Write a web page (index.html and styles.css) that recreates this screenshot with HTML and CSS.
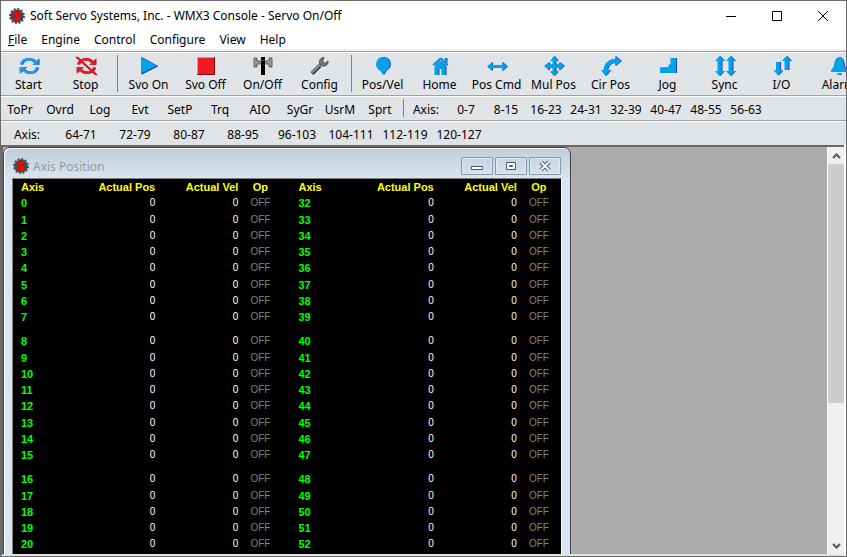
FILE: index.html
```html
<!DOCTYPE html>
<html lang="en">
<head>
    <meta charset="UTF-8">
    <meta name="viewport" content="width=device-width, initial-scale=1.0">
    <title>Soft Servo Systems, Inc. - WMX3 Console - Servo On/Off</title>
    <link rel="stylesheet" href="styles.css">
</head>
<body>
    <!-- shared icon shapes -->
    <svg class="defs" width="0" height="0">
        <symbol id="gear" viewBox="0 0 16 16">
            <circle cx="8" cy="8" r="7" fill="none" stroke="#555" stroke-width="2" stroke-dasharray="2.2 1.46"/>
            <circle cx="8" cy="8" r="6.6" fill="#484848"/>
            <path d="M4.500 4L11 3.200V5L9 8l2.500 3-.3 1.300-6.700.700V11.500L7 8 4.500 5.500z" fill="#f00"/>
        </symbol>
        <symbol id="cycle" viewBox="0 0 20 18">
            <path d="M2 7.500C3 4 6 2.200 9.500 2.200c2.500 0 4.500 1 6 2.800M18 10.500c-1 3.500-4 5.300-7.500 5.300-2.500 0-4.500-1-6-2.800" fill="none" stroke="currentColor" stroke-width="2.400"/>
            <path d="M19.500 1.500V8H13zM.5 16.500V10H7z" fill="currentColor"/>
        </symbol>
    </svg>

    <div class="window">
        <header class="title-bar">
            <svg class="app-icon"><use href="#gear"/></svg>
            <h1>Soft Servo Systems, Inc. - WMX3 Console - Servo On/Off</h1>
            <button class="caption" aria-label="Minimize"><svg width="10" height="10"><path d="M0 5.500h10"/></svg></button>
            <button class="caption" aria-label="Maximize"><svg width="10" height="10"><path d="M.5.5h9v9h-9z"/></svg></button>
            <button class="caption" aria-label="Close"><svg width="10" height="10"><path d="M0 0l10 10M10 0L0 10"/></svg></button>
        </header>

        <nav class="menu-bar">
            <button><u>F</u>ile</button>
            <button>Engine</button>
            <button>Control</button>
            <button>Configure</button>
            <button>View</button>
            <button>Help</button>
        </nav>

        <div class="toolbar main-tools">
            <button><svg viewBox="0 0 20 18" color="#1c9cf0"><use href="#cycle"/></svg>Start</button>
            <button><svg class="stop" viewBox="0 0 20 18" color="#e0202c"><use href="#cycle"/><path d="M0 0l20 18" stroke="#e81123" stroke-width="1.500"/></svg>Stop</button>
            <i class="sep"></i>
            <button><svg viewBox="0 0 20 18"><path d="M2 0v17l16-8z" fill="#00a2e8"/><path d="M2 17l16-8" stroke="#2848c8"/></svg>Svo On</button>
            <button><svg class="flat" viewBox="0 0 20 18"><path d="M1 0h18v18H1z" fill="#880015"/><path d="M1 0h17v17H1z" fill="#ff8a94"/><path d="M2 1h16v16H2z" fill="#ed1c24"/></svg>Svo Off</button>
            <button><svg class="flat" viewBox="0 0 20 18"><path d="M8 0h4v3H8zM8 7h4v11H8z" fill="#000"/><path d="M1 1h3v3h12V1h3v9h-3V7H4v3H1z" fill="#999" stroke="#444" stroke-width=".8"/><path d="M8 3.500h4v4H8z" fill="#000"/></svg>On/Off</button>
            <button><svg class="flat" viewBox="0 0 20 18"><path d="M2 16.500l8-8" stroke="#333" stroke-width="4"/><path d="M2 15.500l9-9" stroke="#8a8a8a" stroke-width="2.500"/><path d="M14 .5c-3 0-5 2.500-4.500 5S12 9.500 14.500 9s4-2.500 3.500-5L15 6.500 12.500 4z" fill="#777" stroke="#333" stroke-width=".8"/></svg>Config</button>
            <i class="sep"></i>
            <button><svg viewBox="0 0 20 18"><path d="M10 0a7 7 0 0 1 7 7c0 3-1.500 5-4 6.500L10 18l-2.500-4C4.500 12.500 3 10 3 7a7 7 0 0 1 7-7z" fill="#00a2e8"/></svg>Pos/Vel</button>
            <button><svg viewBox="0 0 20 18"><path d="M10 .5l7.500 7-1 1-6.500-6-6.500 6-1-1zM10 4l5.500 5v9h-4v-6h-3v6h-4V9zM14.500 1h2v5l-2-2z" fill="#00a2e8"/></svg>Home</button>
            <button><svg viewBox="0 0 20 18"><path d="M0 9.500L5 5v3h10V5l5 4.500-5 4.500v-3H5v3z" fill="#00a2e8"/></svg>Pos Cmd</button>
            <button><svg viewBox="0 0 20 18"><path d="M10-1l4 5h-2.500v3.500H15V5l5 4-5 4.500V11h-3.500v3.500H14l-4 4.500-4-4.500h2.500V11H5v2.500L0 9l5-4v2.500h3.500V4H6z" fill="#00a2e8"/></svg>Mul Pos</button>
            <button><svg viewBox="0 0 20 18"><path d="M4.500 14c0-6 4-10 10-10" fill="none" stroke="#00a2e8" stroke-width="4"/><path d="M14-1l6 5-6 5zM0 13h9.500l-5 6z" fill="#00a2e8"/></svg>Cir Pos</button>
            <button><svg viewBox="0 0 20 18"><path d="M2 10.500h8.500V8l2-1V1H18v15H2z" fill="#00a2e8"/></svg>Jog</button>
            <button><svg viewBox="0 0 20 18"><path d="M4.500-1L9 4H6.500v10H9l-4.500 5L0 14h2.500V4H0zM15.500-1L20 4h-2.500v10H20l-4.500 5-4.500-5h2.500V4H11z" fill="#00a2e8"/></svg>Sync</button>
            <button><svg viewBox="0 0 20 18"><path d="M4 5h4v8.500h2.500L6 18.500l-4.500-5H4zM14.500-1L19 4h-2.500v9h-4V4H10z" fill="#00a2e8"/></svg>I/O</button>
            <button><svg viewBox="0 0 20 18"><path d="M10 0c4 1 4.500 4 5 9l3 4.500V15H2v-1.500L5 9c.5-5 1-8 5-9zM8.500 16h3v2h-3z" fill="#00a2e8"/></svg>Alarm</button>
        </div>

        <div class="toolbar page-tools">
            <button>ToPr</button>
            <button>Ovrd</button>
            <button>Log</button>
            <button>Evt</button>
            <button>SetP</button>
            <button>Trq</button>
            <button>AIO</button>
            <button>SyGr</button>
            <button>UsrM</button>
            <button>Sprt</button>
            <i class="sep"></i>
            <span>Axis:</span>
            <button>0-7</button>
            <button>8-15</button>
            <button>16-23</button>
            <button>24-31</button>
            <button>32-39</button>
            <button>40-47</button>
            <button>48-55</button>
            <button>56-63</button>
        </div>

        <div class="toolbar axis-tools">
            <span>Axis:</span>
            <button>64-71</button>
            <button>72-79</button>
            <button>80-87</button>
            <button>88-95</button>
            <button>96-103</button>
            <button>104-111</button>
            <button>112-119</button>
            <button>120-127</button>
        </div>

        <main class="workspace">
            <div class="desktop">
                <section class="child">
                    <header class="child-bar">
                        <svg class="app-icon"><use href="#gear"/></svg>
                        <h2>Axis Position</h2>
                        <button aria-label="Minimize"><svg width="12" height="10"><path d="M.5 5.500h11v3H.5z" fill="#fff" stroke="#556"/></svg></button>
                        <button aria-label="Maximize"><svg width="12" height="10"><path d="M1.500 1.500h9v7h-9z" fill="#fff" stroke="#556"/><path d="M4.500 4.500h3v1h-3z" fill="none" stroke="#556"/></svg></button>
                        <button aria-label="Close"><svg width="12" height="10"><path d="M2 1l8 8M10 1L2 9" stroke="#556" stroke-width="4"/><path d="M2 1l8 8M10 1L2 9" stroke="#fff" stroke-width="1.800"/></svg></button>
                    </header>
                    <div class="panel">
                        <table>
                            <colgroup>
                                <col class="w-axis"><col class="w-pos"><col class="w-vel"><col class="w-op">
                                <col class="w-axis2"><col class="w-pos"><col class="w-vel"><col class="w-op">
                            </colgroup>
                            <thead>
                                <tr>
                                    <th class="first">Axis</th><th>Actual Pos</th><th>Actual Vel</th><th class="op">Op</th>
                                    <th class="second">Axis</th><th>Actual Pos</th><th>Actual Vel</th><th class="op">Op</th>
                                </tr>
                            </thead>
                        </table>
                    </div>
                </section>
            </div>
            <div class="scrollbar">
                <button aria-label="Scroll up"><svg width="9" height="6"><path d="M1 5l3.500-3.500L8 5"/></svg></button>
                <div class="track"><div class="thumb"></div></div>
                <button aria-label="Scroll down"><svg width="9" height="6"><path d="M1 1l3.500 3.500L8 1"/></svg></button>
            </div>
        </main>
    </div>

    <script src="script.js"></script>
</body>
</html>
```
FILE: styles.css
```css
* {
    box-sizing: border-box;
}

body {
    margin: 0;
    font-family: "Noto Sans", "Open Sans", sans-serif;
    font-size: 12px;
    color: #000;
}

.defs {
    position: absolute;
}

button {
    border: none;
    background: none;
    padding: 0;
    font: inherit;
    color: inherit;
    white-space: nowrap;
}

h1, h2 {
    margin: 0;
    font-size: 12px;
    font-weight: normal;
}

.app-icon {
    width: 16px;
    height: 16px;
    flex: none;
}

.window {
    display: flex;
    flex-direction: column;
    height: 100vh;
    overflow: hidden;
    border: 1px solid #6b6b6b;
    background: #fff;
}

.title-bar {
    display: flex;
    align-items: center;
    flex: none;
    height: 29px;
    padding-left: 8px;
}

.title-bar h1 {
    flex: 1;
    margin-left: 5px;
}

.caption {
    width: 46px;
    height: 29px;
}

.caption svg {
    display: block;
    margin: 0 auto;
    fill: none;
    stroke: #000;
}

.menu-bar {
    display: flex;
    flex: none;
    height: 21px;
    line-height: 20px;
    border-bottom: 2px solid #f0f0f0;
}

.menu-bar button {
    padding: 0 7px;
}

.toolbar {
    display: flex;
    flex: none;
    overflow: hidden;
    margin-left: -1px;
    background: #e0e4e7;
    border-top: 1px solid #a0a0a0;
    border-left: 1px solid #6b6b6b;
    box-shadow: inset 0 1px #fff;
}

.toolbar button,
.toolbar span {
    flex: none;
    text-align: center;
}

.toolbar > :first-child {
    margin-left: -1px;
}

.sep {
    flex: none;
    width: 6px;
    margin: 3px 0;
    background: linear-gradient(#808080, #808080) 3px 0 / 1px 100% no-repeat;
}

.main-tools {
    height: 44px;
}

.main-tools button {
    width: 57px;
    padding-top: 4px;
    line-height: 20px;
}

.main-tools svg {
    display: block;
    width: 20px;
    height: 18px;
    margin: 0 auto;
    overflow: visible;
    filter: drop-shadow(1px 0 #2040c8);
}

.main-tools .flat {
    filter: none;
}

.main-tools .stop {
    filter: drop-shadow(1px 0 #a01020);
}

.page-tools,
.axis-tools {
    height: 25px;
    line-height: 28px;
}

.page-tools button,
.page-tools span {
    width: 40px;
}

.axis-tools button,
.axis-tools span {
    width: 54px;
}

.page-tools button,
.axis-tools button {
    line-height: 24px;
    padding-top: 2px;
}

.workspace {
    display: flex;
    flex: 1;
    min-height: 0;
    margin-right: 2px;
    border: solid #696969;
    border-width: 2px 0 0 2px;
    border-bottom: 2px solid #e3e3e3;
}

.desktop {
    flex: 1;
    overflow: hidden;
    background: #ababab;
}

.child {
    display: flex;
    flex-direction: column;
    width: 568px;
    height: 120%;
    padding: 0 8px 8px;
    border: 1px solid #444;
    border-radius: 7px 7px 0 0;
    background: linear-gradient(#bfcddb, #d7e4f2 30px);
    box-shadow: inset 1px 1px #fff;
}

.child-bar {
    display: flex;
    align-items: center;
    flex: none;
    height: 30px;
    padding: 6px 1px 0;
    color: #999;
}

.child-bar h2 {
    flex: 1;
    margin-left: 4px;
}

.child-bar button {
    width: 32px;
    height: 18px;
    margin-left: 2px;
    border: 1px solid #8a98ad;
    border-radius: 1px;
    box-shadow: inset 0 0 0 1px #dfe8f2;
}

.child-bar button svg {
    display: block;
    margin: 0 auto;
}

.panel {
    flex: 1;
    border: 1px solid #808080;
    border-right-color: #fff;
    background: #000;
}

table {
    width: 100%;
    table-layout: fixed;
    border-collapse: collapse;
    font-family: "Liberation Sans", Arial, sans-serif;
    font-size: 11px;
    line-height: 16px;
}

.w-axis {
    width: 70px;
}

.w-axis2 {
    width: 79px;
}

.w-pos {
    width: 72px;
}

.w-vel {
    width: 83px;
}

.w-op {
    width: 44px;
}

tr {
    height: 16px;
}

tbody tr:nth-child(4n+1) {
    height: 17px;
}

tbody + tbody::before {
    content: "";
    display: block;
    height: 8px;
}

th, td {
    padding: 0;
    text-align: right;
    vertical-align: top;
    color: #fff;
}

td {
    font-size: 10px;
}

thead th {
    color: #ff0;
}

.first,
.second {
    padding-left: 8px;
    text-align: left;
}

.second {
    padding-left: 16px;
}

tbody th {
    color: #0f0;
}

.op {
    text-align: center;
    color: #808080;
}

thead .op {
    color: #ff0;
}

.scrollbar {
    display: flex;
    flex-direction: column;
    flex: none;
    width: 17px;
    border-left: 1px solid #fff;
    background: #f0f0f0;
}

.scrollbar button {
    height: 17px;
}

.scrollbar svg {
    display: block;
    margin: 0 auto;
    fill: none;
    stroke: #555;
    stroke-width: 2;
}

.track {
    flex: 1;
}

.thumb {
    height: 64%;
    background: #cdcdcd;
}
```
FILE: script.js
```js
const table = document.querySelector('.panel table');
const lastAxis = 20;

function cells(axis, cls) {
    return `<th class="${cls}">${axis}</th><td>0</td><td>0</td><td class="op">OFF</td>`;
}

// 8 axes per block, second half of the table starts at axis 32
for (let start = 0; start <= lastAxis; start += 8) {
    const block = document.createElement('tbody');
    for (let axis = start; axis < start + 8 && axis <= lastAxis; axis++) {
        block.innerHTML += `<tr>${cells(axis, 'first')}${cells(axis + 32, 'second')}</tr>`;
    }
    table.appendChild(block);
}
```
